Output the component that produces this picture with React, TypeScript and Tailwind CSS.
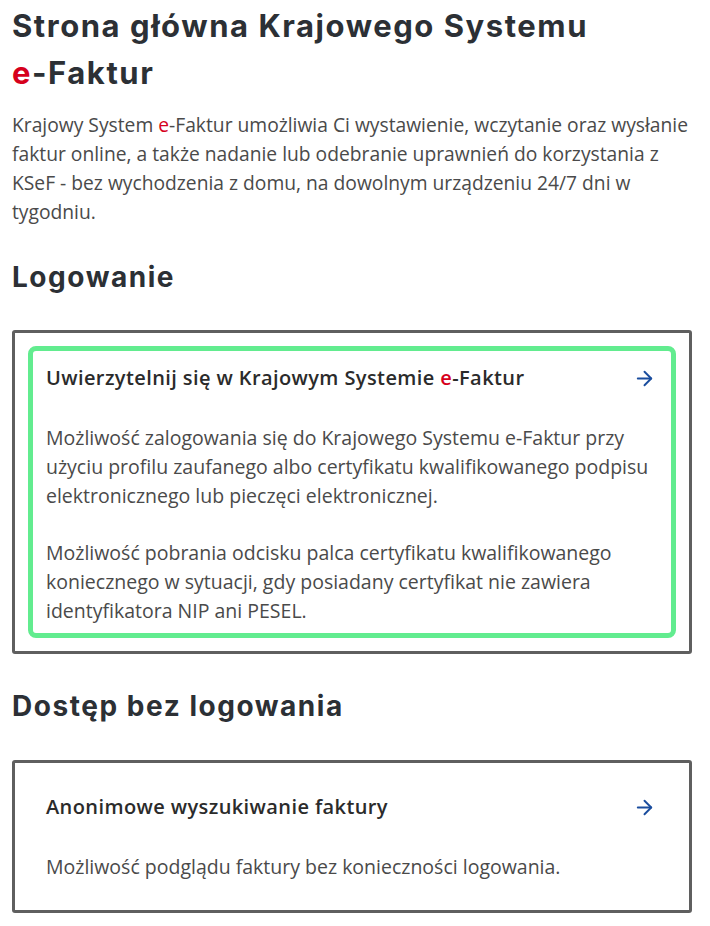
import React from 'react';
import { ArrowRight } from 'lucide-react';

const heading = "font-['Inter',sans-serif] font-bold text-[#2c3035]";
const body = "font-['Open_Sans',sans-serif] text-[19.5px] leading-[29px] text-[#4a4a4a]";

function Red({ children }: { children: React.ReactNode }) {
  return <span className="text-[#d6001c]">{children}</span>;
}

function CardHead({ children }: { children: React.ReactNode }) {
  return (
    <div className="flex items-center justify-between">
      <h3 className="font-['Open_Sans',sans-serif] font-semibold text-[20px] leading-[28px] tracking-[0.02em] text-[#2b2b2b]">{children}</h3>
      <ArrowRight className="w-[23px] h-[23px] mr-[2px] text-[#1a4d9e]" strokeWidth={2} />
    </div>
  );
}

export default function App() {
  return (
    <div className="bg-white min-h-[926px] w-[710px] pl-3 pr-[18px] pt-[2px]">
      {/* Title */}
      <h1 className={`${heading} text-[31px] leading-[47px] tracking-[0.05em]`}>
        Strona główna Krajowego Systemu{' '}
        <span className="whitespace-nowrap">
          <Red>e</Red>-Faktur
        </span>
      </h1>
      <p className={`${body} text-[19.25px] mt-[14px]`}>
        Krajowy System <Red>e</Red>-Faktur umożliwia Ci wystawienie, wczytanie oraz wysłanie faktur online, a także nadanie lub odebranie uprawnień do korzystania z KSeF - bez wychodzenia z domu, na dowolnym urządzeniu 24/7 dni w tygodniu.
      </p>

      {/* Logowanie */}
      <h2 className={`${heading} text-[28px] leading-[40px] tracking-[0.055em] mt-[31px]`}>Logowanie</h2>
      <div className="mt-[33px] border-[3px] border-[#5f5f5f] rounded-[3px] p-[13px]">
        <div className="border-[5px] border-[#62ec8f] rounded-[8px] px-[13px] pt-[13px] pb-[8px]">
          <CardHead>
            Uwierzytelnij się w Krajowym Systemie <Red>e</Red>-Faktur
          </CardHead>
          <p className={`${body} mt-[31px]`}>
            Możliwość zalogowania się do Krajowego Systemu e-Faktur przy użyciu profilu zaufanego albo certyfikatu kwalifikowanego podpisu elektronicznego lub pieczęci elektronicznej.
          </p>
          <p className={`${body} mt-[28px]`}>
            Możliwość pobrania odcisku palca certyfikatu kwalifikowanego koniecznego w sytuacji, gdy posiadany certyfikat nie zawiera identyfikatora NIP ani PESEL.
          </p>
        </div>
      </div>

      {/* Dostęp bez logowania */}
      <h2 className={`${heading} text-[28px] leading-[40px] tracking-[0.055em] mt-[32px]`}>Dostęp bez logowania</h2>
      <div className="mt-[34px] border-[3px] border-[#5f5f5f] rounded-[3px] px-[31px] pt-[30px] pb-[29px]">
        <CardHead>Anonimowe wyszukiwanie faktury</CardHead>
        <p className={`${body} mt-[31px]`}>Możliwość podglądu faktury bez konieczności logowania.</p>
      </div>
    </div>
  );
}
